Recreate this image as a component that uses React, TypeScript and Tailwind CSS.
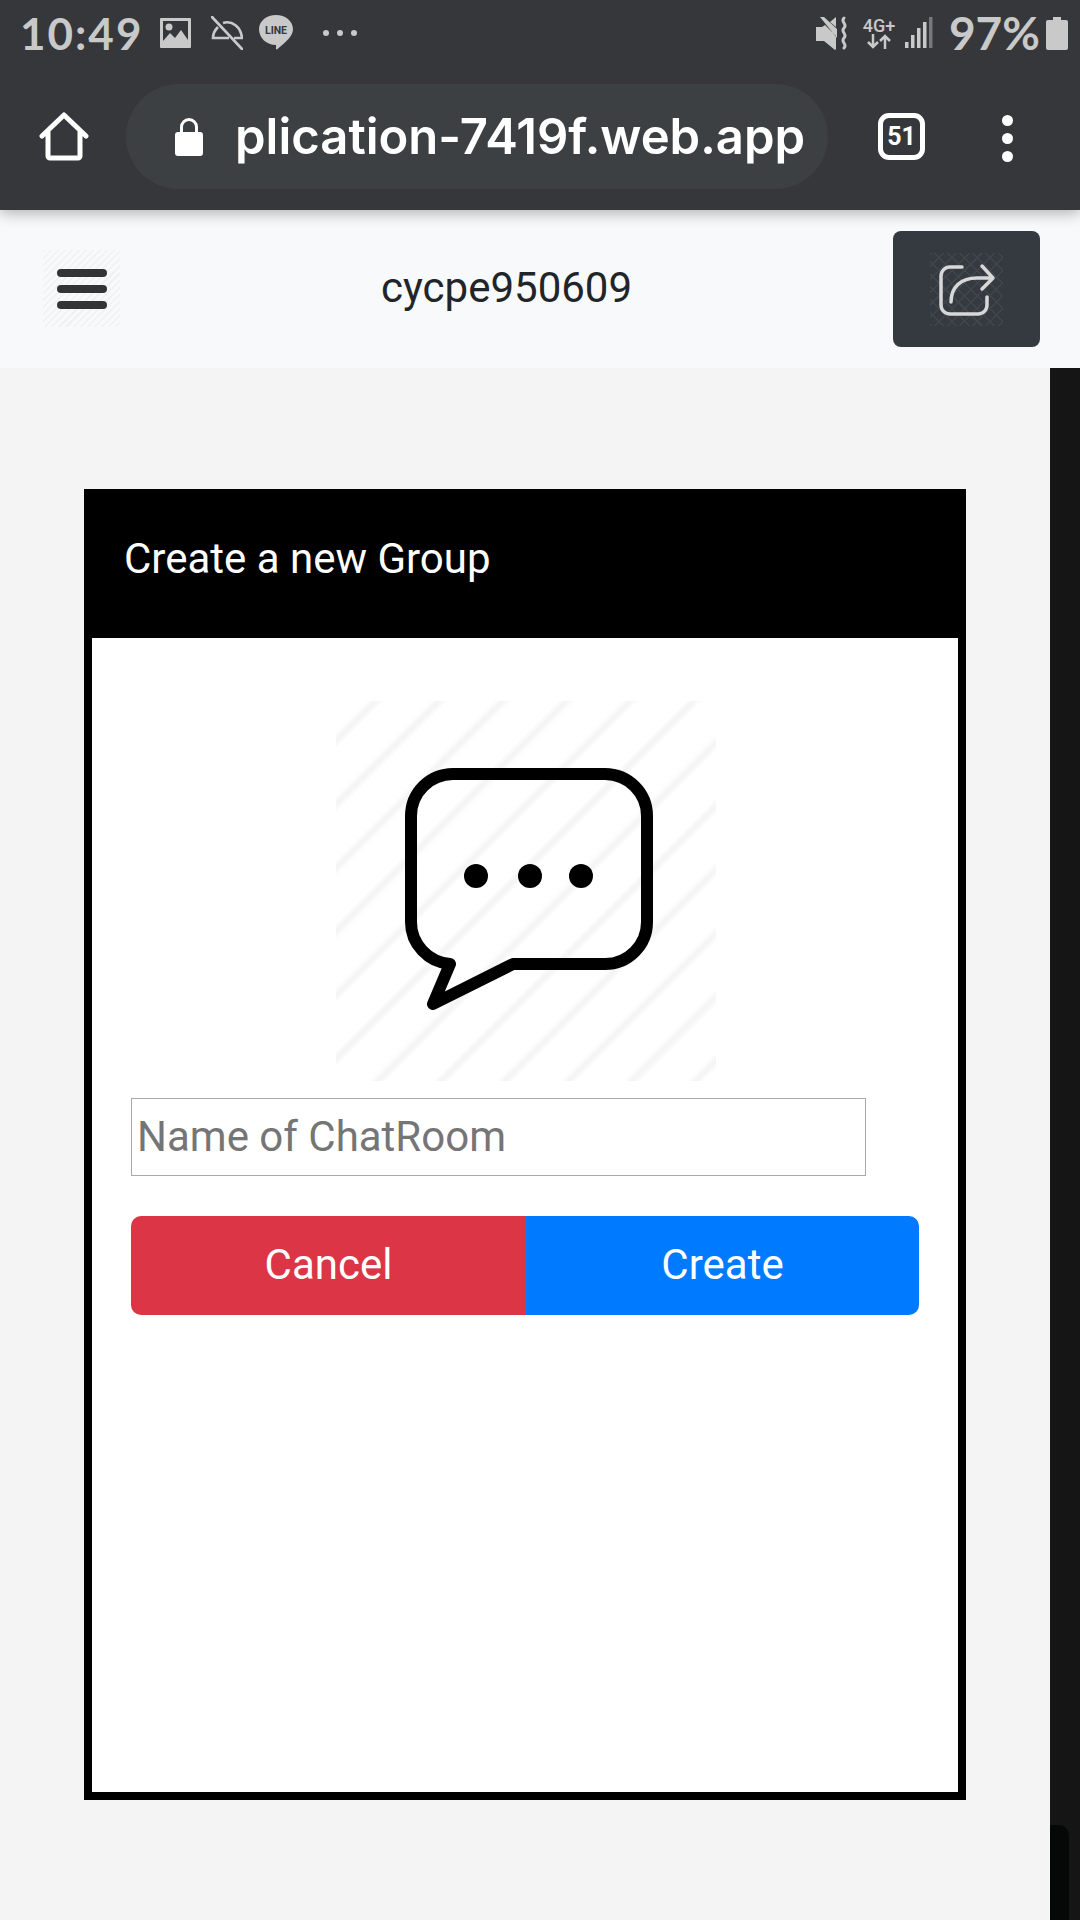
const roboto = "font-['Roboto',sans-serif]";

const StatusBar = () => (
  <div className="flex h-[66px] items-center pl-[20px] pr-[12px] text-[#c9c9c9]">
    <span className="w-[122px] font-['Lato',sans-serif] text-[44px] leading-none font-bold tracking-[2px]">10:49</span>
    {/* picture */}
    <svg className="ml-[18px] h-[30px] w-[31px]" viewBox="0 0 31 30">
      <path fill="currentColor" fillRule="evenodd" d="M1 0h29a1 1 0 0 1 1 1v28a1 1 0 0 1-1 1H1a1 1 0 0 1-1-1V1a1 1 0 0 1 1-1zm2 3v20l7-8 5 5 6-8 7 10V3z" />
      <circle cx="9" cy="9" r="3.5" fill="currentColor" />
    </svg>
    {/* no alarm */}
    <svg className="ml-[20px] h-[34px] w-[32px]" viewBox="0 0 32 34" fill="none" stroke="currentColor" strokeWidth="2.6">
      <path d="M1 1l30 32" strokeLinecap="round" />
      <path d="M12 7c9-3 18 4 19 15h-8M18 22H2c0-5 2-8 5-11" />
    </svg>
    {/* line */}
    <svg className="ml-[16px] h-[36px] w-[34px]" viewBox="0 0 34 36">
      <path fill="currentColor" d="M17 0c9.4 0 17 6.2 17 14 0 7.500-7.500 13-12 17-2 1.800-4 3.500-4.500 3.500-.8 0-.5-2-.4-4.500C7.500 30 0 23 0 14 0 6.200 7.600 0 17 0z" />
      <text x="17" y="18.500" textAnchor="middle" fontSize="10.500" fontWeight="700" fill="#36373b" fontFamily="Roboto, sans-serif">LINE</text>
    </svg>
    <div className="ml-[30px] flex gap-[8px]">
      <span className="h-[6px] w-[6px] rounded-full bg-[#c9c9c9]" />
      <span className="h-[6px] w-[6px] rounded-full bg-[#c9c9c9]" />
      <span className="h-[6px] w-[6px] rounded-full bg-[#c9c9c9]" />
    </div>

    <div className="ml-auto flex items-center">
      {/* mute vibrate */}
      <svg className="h-[34px] w-[32px]" viewBox="0 0 32 34">
        <path fill="currentColor" d="M0 11h6l3-2 11 11v13l-1 1-11-9H0zM4 1l17 21v-9L8 1zM14 6l6-5v10z" />
        <path fill="none" stroke="currentColor" strokeWidth="3" strokeLinecap="round" d="M28 2c-4 4 4 6 0 10s4 6 0 10 4 6 0 10" />
      </svg>
      <div className={`ml-[15px] flex w-[32px] flex-col items-center ${roboto} text-[18px] leading-[17px] font-medium`}>
        <span>4G+</span>
        <svg className="h-[15px] w-[24px]" viewBox="0 0 24 15" fill="none" stroke="currentColor" strokeWidth="2.500">
          <path d="M6 0v13M1 8l5 5 5-5M18 15V2M13 7l5-5 5 5" />
        </svg>
      </div>
      <svg className="ml-[10px] h-[32px] w-[28px]" viewBox="0 0 28 32">
        <rect x="0" y="25" width="3.500" height="6" fill="currentColor" />
        <rect x="6" y="18" width="3.500" height="13" fill="currentColor" />
        <rect x="12" y="11" width="3.500" height="20" fill="currentColor" />
        <rect x="18" y="5" width="3.500" height="26" fill="currentColor" />
        <rect x="24" y="0" width="3.500" height="31" fill="#77787a" />
      </svg>
      <span className="ml-[16px] font-['Lato',sans-serif] text-[46px] leading-none font-bold">97%</span>
      <svg className="ml-[6px] h-[33px] w-[22px]" viewBox="0 0 22 33">
        <path fill="currentColor" d="M7 0h8v3h5a2 2 0 0 1 2 2v26a2 2 0 0 1-2 2H2a2 2 0 0 1-2-2V5a2 2 0 0 1 2-2h5z" />
      </svg>
    </div>
  </div>
);

const Toolbar = () => (
  <div className="flex h-[144px] items-start pl-[39px] pt-[18px]">
    <svg className="mt-[28px] h-[50px] w-[50px]" viewBox="0 0 50 50" fill="none" stroke="white" strokeWidth="5" strokeLinejoin="round" strokeLinecap="round">
      <path d="M3 24L25 3l22 21M9 19v25a2 2 0 0 0 2 2h28a2 2 0 0 0 2-2V19" />
    </svg>
    <div className="ml-[37px] flex h-[105px] w-[702px] items-center overflow-hidden rounded-full bg-[#3c4043] pl-[49px]">
      <svg className="h-[38px] w-[28px] shrink-0" viewBox="0 0 28 38">
        <path fill="white" d="M3 14h2v-5a9 9 0 0 1 18 0v5h2a3 3 0 0 1 3 3v18a3 3 0 0 1-3 3H3a3 3 0 0 1-3-3V17a3 3 0 0 1 3-3zm5 0h12V9a6 6 0 0 0-12 0z" />
      </svg>
      <span className="ml-[32px] font-['Inter',sans-serif] text-[49px] leading-none font-semibold whitespace-nowrap text-white">plication-7419f.web.app</span>
    </div>
    <div className={`ml-[50px] mt-[29px] flex h-[47px] w-[47px] items-center justify-center rounded-[11px] border-[5px] border-white ${roboto} text-[25px] leading-none font-bold text-white`}>51</div>
    <div className="ml-[77px] mt-[31px] flex flex-col gap-[7px]">
      <span className="h-[11px] w-[11px] rounded-full bg-white" />
      <span className="h-[11px] w-[11px] rounded-full bg-white" />
      <span className="h-[11px] w-[11px] rounded-full bg-white" />
    </div>
  </div>
);

const NavBar = () => (
  <div className="flex h-[158px] items-start bg-[#f8f9fa]">
    <div className="ml-[43px] mt-[40px] flex h-[77px] w-[77px] flex-col items-center justify-center gap-[8px] bg-[repeating-linear-gradient(135deg,#f0f1f2_0,#f0f1f2_1.5px,#f8f9fa_1.5px,#f8f9fa_5px)]">
      <span className="h-[8px] w-[50px] rounded-full bg-[#343434]" />
      <span className="h-[8px] w-[50px] rounded-full bg-[#343434]" />
      <span className="h-[8px] w-[50px] rounded-full bg-[#343434]" />
    </div>
    <div className={`mt-[54px] ml-[261px] w-[250px] ${roboto} text-[42px] leading-[48px] whitespace-nowrap text-[#212529]`}>cycpe950609</div>
    <div className="ml-[262px] mt-[21px] flex h-[116px] w-[147px] items-center justify-center rounded-[8px] bg-[#343a40]">
      <div className="flex h-[73px] w-[73px] items-center justify-center bg-[repeating-linear-gradient(45deg,#3f454b_0,#3f454b_1.500px,transparent_1.500px,transparent_9px),repeating-linear-gradient(135deg,#3f454b_0,#3f454b_1.500px,transparent_1.500px,transparent_9px)]">
        <svg className="h-[73px] w-[73px]" viewBox="0 0 73 73" fill="none" stroke="#d8d8d8" strokeWidth="3.500" strokeLinecap="round" strokeLinejoin="round">
          <path d="M32 14H20a9 9 0 0 0-9 9v29a9 9 0 0 0 9 9h28a9 9 0 0 0 9-9v-8" />
          <path d="M21 49c0-15 10-24 26-24h16M52 13l11 12-11 11" />
        </svg>
      </div>
    </div>
  </div>
);

const ChatIcon = () => (
  <div className="ml-[205px] h-[380px] w-[380px] bg-[repeating-linear-gradient(135deg,#ffffff_0,#ffffff_22px,#f5f5f5_27px,#f5f5f5_29px,#ffffff_34px,#ffffff_45px)]">
    <svg className="h-[380px] w-[380px]" viewBox="0 0 380 380">
      <path
        d="M114 263C92 261 75 243 75 221V115a42 42 0 0 1 42-42H269a42 42 0 0 1 42 42V221a42 42 0 0 1-42 42H177L97 303Z"
        fill="none"
        stroke="#000"
        strokeWidth="12"
        strokeLinejoin="round"
      />
      <circle cx="140" cy="175" r="12" />
      <circle cx="194" cy="175" r="12" />
      <circle cx="245" cy="175" r="12" />
    </svg>
  </div>
);

export default function App() {
  return (
    <div className={`flex h-[1920px] w-[1080px] flex-col overflow-hidden bg-[#f4f4f4] ${roboto}`}>
      <div className="relative z-10 bg-[#36373b] shadow-[0_3px_14px_rgba(0,0,0,0.3)]">
        <StatusBar />
        <Toolbar />
      </div>
      <NavBar />
      <div className="flex flex-1">
        <div className="flex-1 pl-[84px] pt-[121px]">
          <div className="flex h-[1311px] w-[882px] flex-col border-[8px] border-t-0 border-black bg-white">
            <div className="-mx-[8px] flex h-[149px] shrink-0 items-center bg-black pb-[10px] pl-[40px] text-[42px] text-white">Create a new Group</div>
            <div className="pt-[63px] pl-[39px]">
              <ChatIcon />
              <input
                className="mt-[17px] block h-[78px] w-[735px] border border-[#a9a9a9] bg-white px-[5px] pb-[2px] text-[42px] text-black outline-none placeholder:text-[#757575]"
                placeholder="Name of ChatRoom"
              />
              <div className="mt-[40px] flex h-[99px] w-[788px] overflow-hidden rounded-[10px] text-[42px] text-white">
                <button className="w-[395px] bg-[#dc3545] pb-[2px]">Cancel</button>
                <button className="flex-1 bg-[#007bff] pb-[2px]">Create</button>
              </div>
            </div>
          </div>
        </div>
        <div className="flex w-[30px] flex-col bg-[#151515]">
          <div className="mt-auto h-[95px] w-[19px] rounded-tr-[10px] bg-[#060807]" />
        </div>
      </div>
    </div>
  );
}
